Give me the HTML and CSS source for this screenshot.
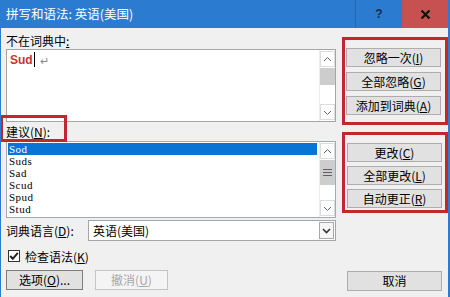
FILE: index.html
```html
<!DOCTYPE html>
<html lang="zh-CN">
<head>
  <meta charset="UTF-8">
  <title>拼写和语法: 英语(美国)</title>
  <link rel="stylesheet" href="styles.css">
</head>
<body>
  <div class="window">
    <div class="titlebar">
      <span class="title">拼写和语法: 英语(美国)</span>
      <span class="tb-btn help">?</span>
      <span class="tb-btn close">
        <svg width="11" height="11" viewBox="0 0 11 11"><path d="M1.5 1.5 L9.5 9.5 M9.5 1.5 L1.5 9.5" stroke="#111" stroke-width="2.2"/></svg>
      </span>
    </div>
    <div class="content">
      <div class="left">
        <div class="top-label">不在词典中<u>:</u></div>
        <div class="editbox">
          <div class="edit-text"><span class="bad">Sud</span><span class="caret"></span><span class="pilcrow">↵</span></div>
          <div class="vscroll">
            <span class="arrow"><svg width="13" height="13" viewBox="0 0 13 13"><path d="M3 8 L6.5 4.5 L10 8" fill="none" stroke="#606060"/></svg></span>
            <span class="thumb short"></span>
            <span class="track"></span>
            <span class="arrow"><svg width="13" height="13" viewBox="0 0 13 13"><path d="M3 5 L6.5 8.5 L10 5" fill="none" stroke="#606060"/></svg></span>
          </div>
        </div>
        <div class="sugg-label">建议(<u>N</u>):<span class="mark"></span></div>
        <div class="listbox">
          <ul class="items">
            <li class="sel">Sod</li>
            <li>Suds</li>
            <li>Sad</li>
            <li>Scud</li>
            <li>Spud</li>
            <li>Stud</li>
          </ul>
          <div class="vscroll">
            <span class="arrow"><svg width="13" height="13" viewBox="0 0 13 13"><path d="M3 8 L6.5 4.5 L10 8" fill="none" stroke="#606060"/></svg></span>
            <span class="thumb tall"><svg width="9" height="7" viewBox="0 0 9 7"><path d="M0 0.5 H9 M0 3.5 H9 M0 6.5 H9" stroke="#606060"/></svg></span>
            <span class="track"></span>
            <span class="arrow"><svg width="13" height="13" viewBox="0 0 13 13"><path d="M3 5 L6.5 8.5 L10 5" fill="none" stroke="#606060"/></svg></span>
          </div>
        </div>
        <div class="lang-row">
          <span class="lang-label">词典语言(<u>D</u>):</span>
          <div class="combo">
            <span class="combo-text">英语(美国)</span>
            <span class="drop"><svg width="11" height="11" viewBox="0 0 11 11"><path d="M2 4 L5.5 7.5 L9 4" fill="none" stroke="#333" stroke-width="1.6"/></svg></span>
          </div>
        </div>
        <div class="check-row">
          <span class="checkbox"><svg width="10" height="10" viewBox="0 0 10 10"><path d="M1.2 5 L3.8 7.8 L8.8 1.8" fill="none" stroke="#222" stroke-width="2"/></svg></span>
          <span>检查语法(<u>K</u>)</span>
        </div>
        <div class="btn-row">
          <button class="btn options">选项(<u>O</u>)...</button>
          <button class="btn disabled">撤消(<u>U</u>)</button>
        </div>
      </div>
      <div class="right">
        <div class="mark-box first">
          <button class="btn">忽略一次(<u>I</u>)</button>
          <button class="btn">全部忽略(<u>G</u>)</button>
          <button class="btn">添加到词典(<u>A</u>)</button>
        </div>
        <div class="mark-box second">
          <button class="btn">更改(<u>C</u>)</button>
          <button class="btn">全部更改(<u>L</u>)</button>
          <button class="btn">自动更正(<u>R</u>)</button>
        </div>
        <button class="btn cancel">取消</button>
      </div>
    </div>
  </div>
</body>
</html>
```

FILE: styles.css
```css
body {
  margin: 0;
  font-family: "Noto Sans CJK SC", "Liberation Sans", sans-serif;
  font-size: 12px;
  color: #000;
}
.window {
  width: 450px;
  height: 297px;
  box-sizing: border-box;
  background: #f0f0f0;
  border-left: 1px solid #2b7bd1;
  border-right: 2px solid #2b7bd1;
  display: flex;
  flex-direction: column;
  overflow: hidden;
}
.titlebar {
  height: 28px;
  flex: none;
  background: #2b7bd1;
  display: flex;
}
.title {
  flex: 1;
  padding-left: 5px;
  line-height: 28px;
  font-size: 12.5px;
  color: #fff;
}
.tb-btn {
  width: 47px;
  display: flex;
  align-items: center;
  justify-content: center;
}
.help {
  border-left: 1px solid #2368b5;
  box-sizing: border-box;
  font-family: "Liberation Sans", sans-serif;
  font-weight: bold;
  font-size: 12px;
  color: #1b2a44;
}
.close {
  width: 46px;
  background: #c75050;
}

.content {
  flex: 1;
  display: flex;
  gap: 6px;
  padding-left: 5px;
}
.left {
  width: 330px;
  display: flex;
  flex-direction: column;
}
.right {
  width: 106px;
  display: flex;
  flex-direction: column;
}
u { text-underline-offset: 1px; }

.top-label {
  height: 21px;
  padding-top: 6px;
  line-height: 14px;
  box-sizing: border-box;
}
.editbox, .listbox {
  border: 1px solid #a5a5a5;
  background: #fff;
  display: flex;
  box-sizing: border-box;
}
.editbox { height: 73px; }
.edit-text {
  flex: 1;
  padding: 2px 0 0 3px;
  display: flex;
  align-items: flex-start;
  height: 16px;
}
.bad {
  font-family: "Liberation Sans", sans-serif;
  font-weight: bold;
  font-size: 12px;
  line-height: 16px;
  color: #c8352c;
}
.caret {
  width: 1px;
  height: 15px;
  background: #000;
  margin-left: 1px;
}
.pilcrow {
  margin-left: 5px;
  color: #8a8a8a;
  font-size: 11px;
  line-height: 16px;
}

.vscroll {
  width: 16px;
  border-left: 1px solid #ececec;
  background: #fff;
  display: flex;
  flex-direction: column;
  box-sizing: border-box;
}
.arrow {
  height: 14px;
  margin: 1px 0;
  border: 1px solid #dcdcdc;
  display: flex;
  align-items: center;
  justify-content: center;
}
.thumb {
  background: #cdcdcd;
  display: flex;
  align-items: center;
  justify-content: center;
}
.thumb.short { height: 17px; }
.thumb.tall { height: 25px; }
.track { flex: 1; }

.sugg-label {
  position: relative;
  height: 19px;
  line-height: 19px;
}
.mark {
  position: absolute;
  left: -6px;
  top: -7px;
  width: 67px;
  height: 27px;
  border: 3px solid #c1272d;
  box-sizing: border-box;
}
.listbox {
  height: 77px;
  border-color: #a3aab5;
}
.items {
  flex: 1;
  list-style: none;
  margin: 0;
  padding: 1px 2px 0 1px;
  font-family: "Liberation Serif", serif;
  font-size: 11px;
  letter-spacing: 0.5px;
}
.items li {
  height: 12px;
  line-height: 12px;
  padding-left: 1px;
}
.items li.sel {
  background: #0a74d6;
  color: #fff;
}

.lang-row {
  margin-top: 2px;
  height: 21px;
  display: flex;
  align-items: center;
}
.lang-label { width: 82px; }
.combo {
  flex: 1;
  height: 21px;
  border: 1px solid #a5a5a5;
  background: #fff;
  display: flex;
  align-items: center;
  box-sizing: border-box;
}
.combo-text {
  flex: 1;
  padding-left: 4px;
}
.drop {
  width: 15px;
  height: 17px;
  margin-right: 1px;
  border: 1px solid #a8a8a8;
  background: #f6f6f6;
  display: flex;
  align-items: center;
  justify-content: center;
  box-sizing: border-box;
}

.check-row {
  margin-top: 7px;
  height: 16px;
  display: flex;
  align-items: center;
  gap: 5px;
}
.checkbox {
  width: 12px;
  height: 12px;
  margin-left: 2px;
  border: 1px solid #333;
  background: #fff;
  box-sizing: border-box;
  display: flex;
  align-items: center;
  justify-content: center;
}

.btn {
  height: 19px;
  padding: 0;
  border: 1px solid #adadad;
  background: #e1e1e1;
  font-family: inherit;
  font-size: 12px;
  line-height: 16px;
  color: #000;
}
.btn-row {
  margin-top: 6px;
  display: flex;
}
.btn-row .btn { height: 20px; }
.options {
  width: 77px;
  border-color: #7e7e7e;
}
.disabled {
  width: 73px;
  margin-left: 12px;
  background: #f4f4f4;
  border-color: #c4c4c4;
  color: #a6a6a6;
}

.mark-box {
  border: 3px solid #c1272d;
  box-sizing: border-box;
  display: flex;
  flex-direction: column;
}
.mark-box .btn { width: 95px; }
.first {
  margin-top: 9px;
  height: 88px;
  padding: 8px 0 0 1px;
  gap: 5px;
}
.second {
  margin-top: 7px;
  height: 81px;
  padding: 8px 0 0 2px;
  gap: 4px;
}
.cancel {
  width: 95px;
  height: 20px;
  margin: auto 0 6px 5px;
}
```
